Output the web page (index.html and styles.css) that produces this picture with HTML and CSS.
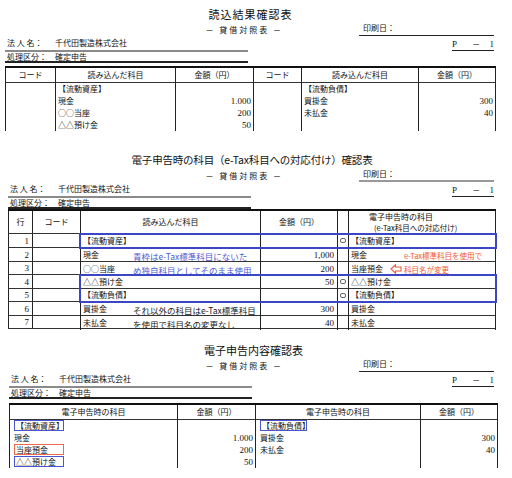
FILE: index.html
```html
<!DOCTYPE html>
<html lang="ja">
<head>
<meta charset="utf-8">
<link rel="stylesheet" href="styles.css">
</head>
<body>
<section class="sheet s1">
  <h1 class="title t-wide">読込結果確認表</h1>
  <div class="subrow">
    <div class="sub">－ 貸借対照表 －</div>
    <div class="print">印刷日：</div>
  </div>
  <div class="info">
    <div class="corp">
      <div class="line1"><span class="lab">法&nbsp;人&nbsp;名：</span>千代田製造株式会社</div>
      <div class="line2"><span class="lab">処理区分：</span>確定申告</div>
    </div>
    <div class="page"><span>P</span><span class="dash">－</span><span>1</span></div>
  </div>
  <div class="pair">
    <div class="tbl t1l">
      <div class="hd">コード</div>
      <div class="hd">読み込んだ科目</div>
      <div class="hd">金額（円）</div>
      <div class="bd"></div>
      <div class="bd">
        <div class="ln">【流動資産】</div>
        <div class="ln">現金</div>
        <div class="ln">○○当座</div>
        <div class="ln">△△預け金</div>
      </div>
      <div class="bd">
        <div class="ln"></div>
        <div class="ln amt">1.000</div>
        <div class="ln amt">200</div>
        <div class="ln amt">50</div>
      </div>
    </div>
    <div class="tbl t1r">
      <div class="hd">コード</div>
      <div class="hd">読み込んだ科目</div>
      <div class="hd last">金額（円）</div>
      <div class="bd"></div>
      <div class="bd">
        <div class="ln">【流動負債】</div>
        <div class="ln">買掛金</div>
        <div class="ln">未払金</div>
        <div class="ln"></div>
      </div>
      <div class="bd last">
        <div class="ln"></div>
        <div class="ln amt">300</div>
        <div class="ln amt">40</div>
        <div class="ln"></div>
      </div>
    </div>
  </div>
</section>

<section class="sheet s2">
  <h1 class="title t-narrow">電子申告時の科目（e-Tax科目への対応付け）確認表</h1>
  <div class="subrow">
    <div class="sub">－ 貸借対照表 －</div>
    <div class="print gray">印刷日：</div>
  </div>
  <div class="info">
    <div class="corp">
      <div class="line1"><span class="lab">法&nbsp;人&nbsp;名：</span>千代田製造株式会社</div>
      <div class="line2"><span class="lab">処理区分：</span>確定申告</div>
    </div>
    <div class="page"><span>P</span><span class="dash">－</span><span>1</span></div>
  </div>
  <div class="t2">
    <div class="t2a">
      <div class="row ra head"><div class="c ctr">行</div><div class="c ctr">コード</div></div>
      <div class="row ra r14"><div class="c no">1</div><div class="c"></div></div>
      <div class="row ra r14"><div class="c no">2</div><div class="c"></div></div>
      <div class="row ra r13"><div class="c no">3</div><div class="c"></div></div>
      <div class="row ra r14"><div class="c no">4</div><div class="c"></div></div>
      <div class="row ra r13"><div class="c no">5</div><div class="c"></div></div>
      <div class="row ra r14"><div class="c no">6</div><div class="c"></div></div>
      <div class="row ra r13"><div class="c no">7</div><div class="c"></div></div>
    </div>
    <div class="t2b">
      <div class="row rb head">
        <div class="c ctr">読み込んだ科目</div>
        <div class="c ctr">金額（円）</div>
        <div class="c"></div>
        <div class="c last hd2"><div class="h2a">電子申告時の科目</div><div class="h2b">(e-Tax科目への対応付け)</div></div>
      </div>
      <div class="hl">
        <div class="row rb r14">
          <div class="c tx">【流動資産】</div>
          <div class="c num"></div>
          <div class="c mkc"><span class="mk"></span></div>
          <div class="c last tx">【流動資産】</div>
        </div>
      </div>
      <div class="row rb r14">
        <div class="c tx"><span class="nm">現金</span><span class="note blue">青枠はe-Tax標準科目にないた</span></div>
        <div class="c num">1,000</div>
        <div class="c mkc"></div>
        <div class="c last tx"><span class="nm2">現金</span><span class="note red">e-Tax標準科目を使用で</span></div>
      </div>
      <div class="row rb r13">
        <div class="c tx"><span class="nm">○○当座</span><span class="note blue">め独自科目としてそのまま使用</span></div>
        <div class="c num">200</div>
        <div class="c mkc"></div>
        <div class="c last tx"><span class="nm3">当座預金</span><svg class="arrow" width="12" height="10" viewBox="0 0 12 10"><path d="M1 5 L5.5 0.8 L5.5 3 L11 3 L11 7 L5.5 7 L5.5 9.2 Z" fill="none" stroke="#ee5a3c" stroke-width="1.1" stroke-linejoin="miter"/></svg><span class="note red">科目名が変更</span></div>
      </div>
      <div class="hl">
        <div class="row rb r14">
          <div class="c tx">△△預け金</div>
          <div class="c num">50</div>
          <div class="c mkc"><span class="mk"></span></div>
          <div class="c last tx">△△預け金</div>
        </div>
        <div class="row rb r13">
          <div class="c tx">【流動負債】</div>
          <div class="c num"></div>
          <div class="c mkc"><span class="mk"></span></div>
          <div class="c last tx">【流動負債】</div>
        </div>
      </div>
      <div class="row rb r14">
        <div class="c tx"><span class="nm">買掛金</span><span class="note dark">それ以外の科目はe-Tax標準科目</span></div>
        <div class="c num">300</div>
        <div class="c mkc"></div>
        <div class="c last tx">買掛金</div>
      </div>
      <div class="row rb r13">
        <div class="c tx"><span class="nm">未払金</span><span class="note dark">を使用で科目名の変更なし</span></div>
        <div class="c num">40</div>
        <div class="c mkc"></div>
        <div class="c last tx">未払金</div>
      </div>
    </div>
  </div>
</section>

<section class="sheet s3">
  <h1 class="title">電子申告内容確認表</h1>
  <div class="subrow">
    <div class="sub">－ 貸借対照表 －</div>
    <div class="print">印刷日：</div>
  </div>
  <div class="info">
    <div class="corp">
      <div class="line1"><span class="lab">法&nbsp;人&nbsp;名：</span>千代田製造株式会社</div>
      <div class="line2"><span class="lab">処理区分：</span>確定申告</div>
    </div>
    <div class="page"><span>P</span><span class="dash">－</span><span>1</span></div>
  </div>
  <div class="pair">
    <div class="tbl t3l">
      <div class="hd">電子申告時の科目</div>
      <div class="hd">金額（円）</div>
      <div class="bd p4">
        <div class="ln"><span class="bx blue">【流動資産】</span></div>
        <div class="ln">現金</div>
        <div class="ln"><span class="bx red">当座預金</span></div>
        <div class="ln"><span class="bx blue">△△預け金</span></div>
      </div>
      <div class="bd">
        <div class="ln"></div>
        <div class="ln amt">1.000</div>
        <div class="ln amt">200</div>
        <div class="ln amt">50</div>
      </div>
    </div>
    <div class="tbl t3r">
      <div class="hd">電子申告時の科目</div>
      <div class="hd last">金額（円）</div>
      <div class="bd p4">
        <div class="ln"><span class="bx blue bx2">【流動負債】</span></div>
        <div class="ln">買掛金</div>
        <div class="ln">未払金</div>
        <div class="ln"></div>
      </div>
      <div class="bd last">
        <div class="ln"></div>
        <div class="ln amt">300</div>
        <div class="ln amt">40</div>
        <div class="ln"></div>
      </div>
    </div>
  </div>
</section>
</body>
</html>
```

FILE: styles.css
```css
* { box-sizing: border-box; margin: 0; padding: 0; }
html, body { background: #fff; }
body {
  width: 512px;
  height: 478px;
  overflow: hidden;
  color: #111;
  font-family: "Noto Sans CJK JP", "Noto Sans", sans-serif;
  font-size: 8px;
  line-height: 12px;
}
.sheet { display: flex; flex-direction: column; }
.s1 { padding: 6px 16px 0 5px; }
.s2 { padding: 21px 16px 0 8px; }
.s3 { padding: 13px 14px 0 9px; }
.s3 .subrow, .s3 .info { padding-right: 4px; }

.title {
  font-size: 11px;
  line-height: 16px;
  font-weight: normal;
  text-align: center;
  color: #111;
}
.t-wide { letter-spacing: 1px; }
.t-narrow { font-size: 10.5px; letter-spacing: -0.2px; }

.subrow {
  display: flex;
  justify-content: flex-end;
  padding-right: 2px;
  height: 14px;
}
.sub {
  margin-right: 76px;
  letter-spacing: 2px;
  line-height: 14px;
  padding-top: 1px;
}
.print {
  width: 135px;
  height: 14px;
  line-height: 12px;
  padding-left: 4px;
  border-bottom: 1px solid #222;
}
.print.gray { border-bottom: 2px solid #999; }

.info {
  display: flex;
  justify-content: space-between;
  padding-right: 2px;
}
.corp { width: 243px; }
.line1 {
  height: 16px;
  line-height: 14px;
  border-bottom: 2px solid #8a8a8a;
  padding-left: 2px;
  white-space: nowrap;
}
.line2 {
  height: 11px;
  line-height: 9px;
  border-bottom: 2px solid #222;
  padding-left: 2px;
  white-space: nowrap;
}
.lab { display: inline-block; width: 48px; }
.page {
  width: 42px;
  height: 15px;
  padding-top: 2px;
  line-height: 12px;
  border-bottom: 1px solid #222;
  display: flex;
  justify-content: space-between;
  font-family: "Liberation Serif", serif;
  font-size: 9px;
}
.page .dash { font-family: "Noto Sans CJK JP", sans-serif; font-size: 8px; margin-left: 6px; }

/* section 1 & 3 tables */
.pair { display: flex; margin-top: 3px; }
.s3 .pair { margin-top: 4px; }
.tbl {
  display: grid;
  border-top: 2px solid #111;
  grid-template-rows: 15px auto;
}
.t1l { width: 248px; grid-template-columns: 50px 120px 78px; }
.t1r { width: 243px; grid-template-columns: 48px 117px 78px; }
.t3l { width: 246px; grid-template-columns: 168px 78px; }
.t3r { width: 243px; grid-template-columns: 165px 78px; }
.hd {
  border-left: 1px solid #222;
  border-bottom: 1px solid #333;
  display: flex;
  align-items: center;
  justify-content: center;
  line-height: 12px;
  white-space: nowrap;
}
.bd { border-left: 1px solid #222; height: 48px; padding-left: 2px; }
.last { border-right: 1px solid #222; }
.bd.p4 { padding-left: 4px; }
.ln { height: 12px; line-height: 12px; white-space: nowrap; }
.amt {
  text-align: right;
  padding-right: 2px;
  font-family: "Liberation Serif", serif;
  font-size: 9px;
}
.bx {
  display: inline-block;
  height: 11px;
  line-height: 9px;
  width: 50px;
  border: 1px solid;
  padding-left: 1px;
  vertical-align: top;
}
.bx2 { width: 47px; }
.bx.blue { border-color: #4a56d0; }
.bx.red { border-color: #ee6a4a; }

/* section 2 table */
.t2 {
  display: flex;
  border-top: 2px solid #111;
  width: 488px;
}
.t2a { width: 72px; }
.t2b { width: 416px; }
.row { display: grid; border-bottom: 1px solid #333; }
.ra { grid-template-columns: 24px 48px; }
.rb { grid-template-columns: 180px 77px 11px 148px; }
.head { height: 23px; }
.r14 { height: 14px; }
.r13 { height: 13px; }
.c {
  border-left: 1px solid #222;
  display: flex;
  align-items: center;
  white-space: nowrap;
  min-width: 0;
}
.ctr { justify-content: center; }
.no {
  justify-content: flex-end;
  padding-right: 3px;
  font-family: "Liberation Serif", serif;
  font-size: 9px;
}
.num {
  justify-content: flex-end;
  padding-right: 3px;
  font-family: "Liberation Serif", serif;
  font-size: 9px;
}
.tx { padding-left: 2px; overflow: visible; }
.mkc { justify-content: center; }
.mk {
  display: block;
  width: 6px;
  height: 5px;
  border: 1px solid #666;
  border-radius: 2px;
}
.hd2 {
  flex-direction: column;
  align-items: flex-start;
  justify-content: center;
  line-height: 11px;
}
.h2a { padding-left: 20px; }
.h2b { padding-left: 25px; font-size: 7.5px; }
.hl {
  outline: 2px solid #3a46c6;
  outline-offset: -1px;
  position: relative;
  z-index: 1;
}
.nm { display: inline-block; width: 50px; }
.nm2 { display: inline-block; width: 53px; }
.nm3 { display: inline-block; width: 39px; }
.arrow { display: block; margin-right: 2px; flex: none; }
.note { font-size: 8.5px; padding-top: 2px; }
.note.blue { color: #4d5ad6; }
.note.dark { color: #222; }
.note.red { color: #f0583a; font-size: 7.6px; letter-spacing: -0.1px; }
```
